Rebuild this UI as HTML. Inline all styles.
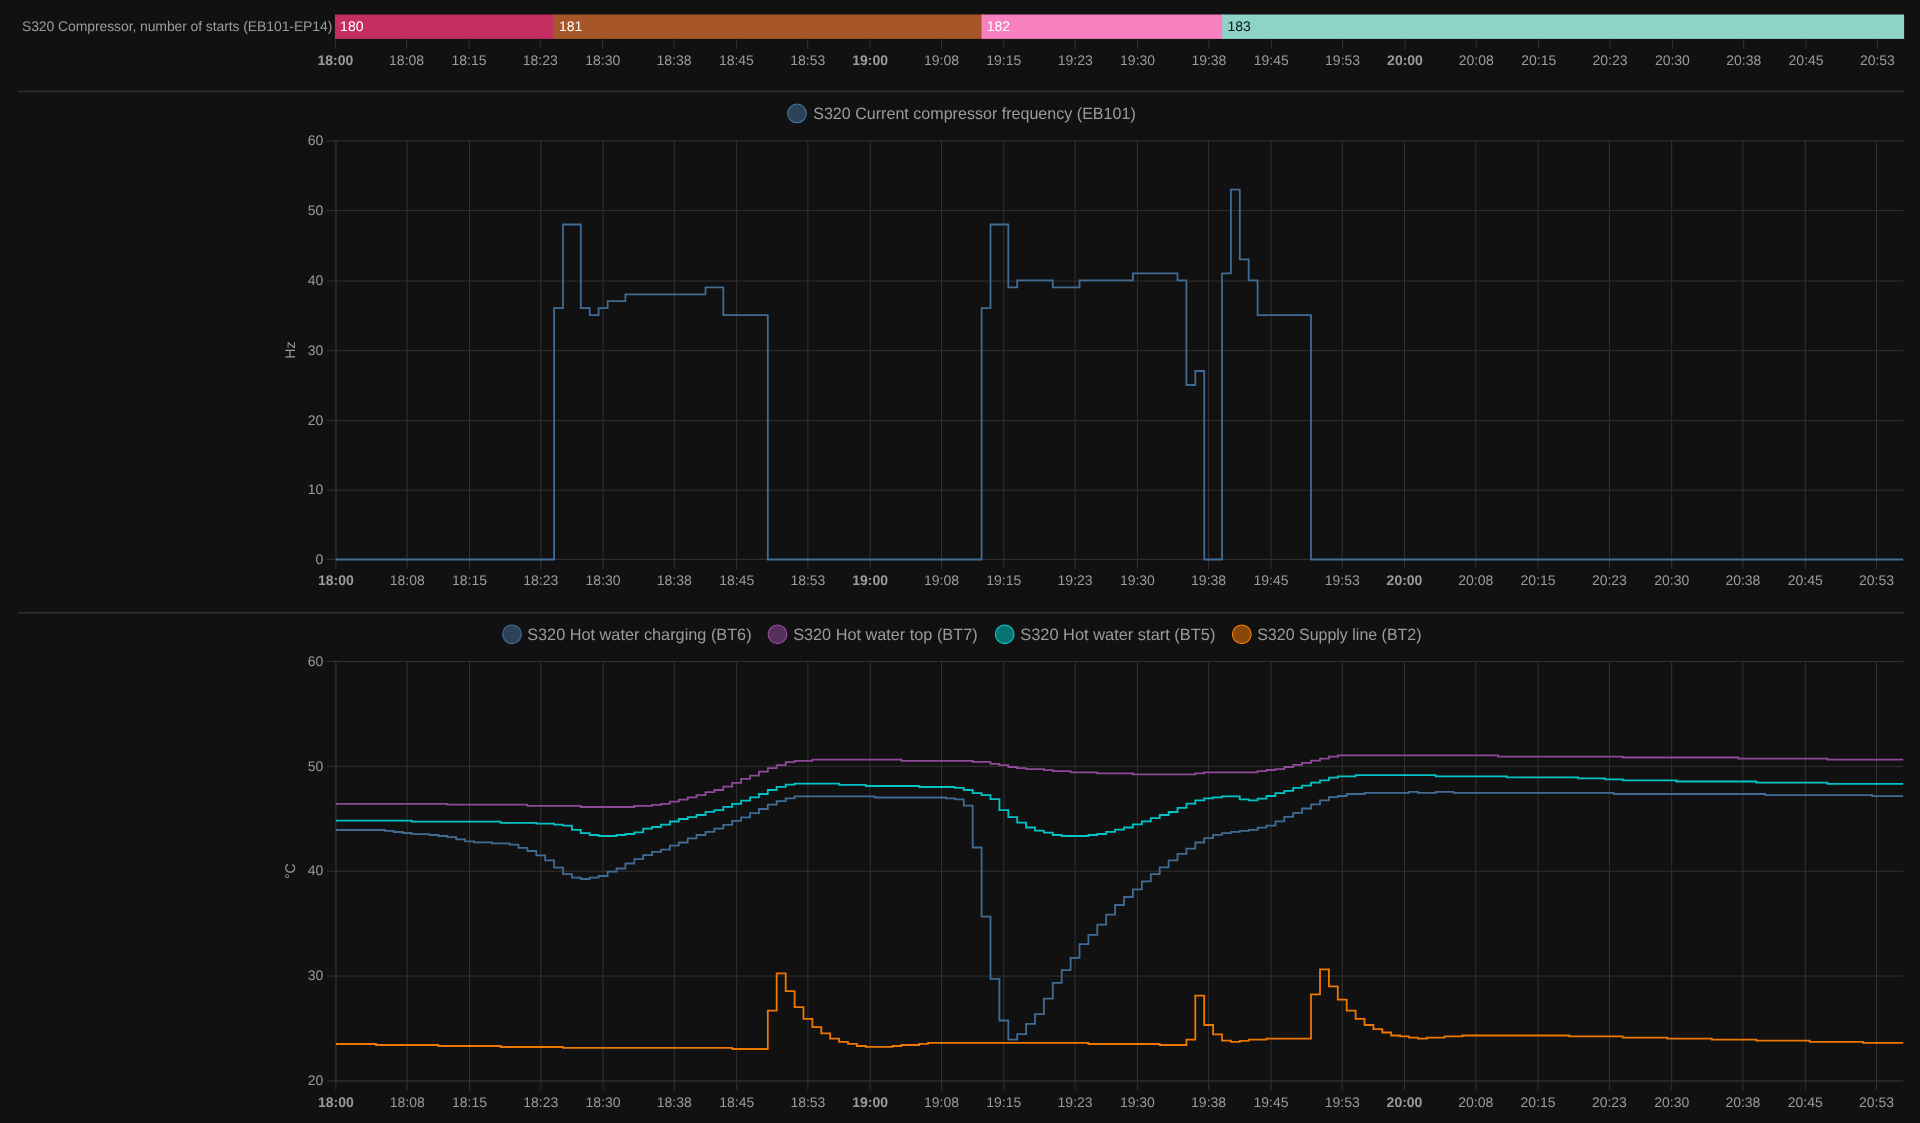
<!DOCTYPE html>
<html lang="en"><head><meta charset="utf-8">
<title>History</title>
<style>
html,body{margin:0;padding:0;background:#111111;}
body{width:1920px;height:1123px;overflow:hidden;font-family:"Liberation Sans", sans-serif;}
svg{display:block;position:absolute;left:0;top:0;will-change:transform;}
text{font-family:"Liberation Sans", sans-serif;font-size:14px;fill:#9b9b9b;text-rendering:geometricPrecision;}
.b{font-weight:bold;}
.lg{font-size:16.4px;}
.grid line{stroke:#323232;stroke-width:1;}
.grid line.h{stroke:#323232;stroke-width:1;}
.grid line.ax{stroke:#2e2e2e;stroke-width:1;}
.sep{stroke:#2b2b2b;stroke-width:2;}
.ser{fill:none;stroke-width:1.8;stroke-opacity:0.93;stroke-linejoin:miter;stroke-linecap:butt;}
</style></head><body>
<svg width="1920" height="1123" viewBox="0 0 1920 1123">
<g id="timeline">
<text x="332.4" y="31" text-anchor="end" textLength="310.5">S320 Compressor, number of starts (EB101-EP14)</text>
<rect x="334.9" y="14.5" width="220.8" height="24.4" fill="#c42e60"/>
<text x="340.1" y="31" style="fill:#ffffff">180</text>
<rect x="553.7" y="14.5" width="429.9" height="24.4" fill="#a65628"/>
<text x="558.9" y="31" style="fill:#ffffff">181</text>
<rect x="981.6" y="14.5" width="242.7" height="24.4" fill="#f781bf"/>
<text x="986.8" y="31" style="fill:#ffffff">182</text>
<rect x="1222.2" y="14.5" width="681.9" height="24.4" fill="#8dd3c7"/>
<text x="1227.4" y="31" style="fill:#0b1513">183</text>
<g class="grid">
<line x1="335.3" y1="38.9" x2="335.3" y2="48.7"/>
<line x1="406.6" y1="38.9" x2="406.6" y2="48.7"/>
<line x1="469.0" y1="38.9" x2="469.0" y2="48.7"/>
<line x1="540.3" y1="38.9" x2="540.3" y2="48.7"/>
<line x1="602.7" y1="38.9" x2="602.7" y2="48.7"/>
<line x1="674.0" y1="38.9" x2="674.0" y2="48.7"/>
<line x1="736.4" y1="38.9" x2="736.4" y2="48.7"/>
<line x1="807.7" y1="38.9" x2="807.7" y2="48.7"/>
<line x1="870.1" y1="38.9" x2="870.1" y2="48.7"/>
<line x1="941.5" y1="38.9" x2="941.5" y2="48.7"/>
<line x1="1003.8" y1="38.9" x2="1003.8" y2="48.7"/>
<line x1="1075.2" y1="38.9" x2="1075.2" y2="48.7"/>
<line x1="1137.6" y1="38.9" x2="1137.6" y2="48.7"/>
<line x1="1208.9" y1="38.9" x2="1208.9" y2="48.7"/>
<line x1="1271.3" y1="38.9" x2="1271.3" y2="48.7"/>
<line x1="1342.6" y1="38.9" x2="1342.6" y2="48.7"/>
<line x1="1405.0" y1="38.9" x2="1405.0" y2="48.7"/>
<line x1="1476.3" y1="38.9" x2="1476.3" y2="48.7"/>
<line x1="1538.7" y1="38.9" x2="1538.7" y2="48.7"/>
<line x1="1610.0" y1="38.9" x2="1610.0" y2="48.7"/>
<line x1="1672.4" y1="38.9" x2="1672.4" y2="48.7"/>
<line x1="1743.7" y1="38.9" x2="1743.7" y2="48.7"/>
<line x1="1806.1" y1="38.9" x2="1806.1" y2="48.7"/>
<line x1="1877.4" y1="38.9" x2="1877.4" y2="48.7"/>
</g>
<text x="335.3" y="64.65" text-anchor="middle" class="b">18:00</text>
<text x="406.6" y="64.65" text-anchor="middle">18:08</text>
<text x="469.0" y="64.65" text-anchor="middle">18:15</text>
<text x="540.3" y="64.65" text-anchor="middle">18:23</text>
<text x="602.7" y="64.65" text-anchor="middle">18:30</text>
<text x="674.0" y="64.65" text-anchor="middle">18:38</text>
<text x="736.4" y="64.65" text-anchor="middle">18:45</text>
<text x="807.7" y="64.65" text-anchor="middle">18:53</text>
<text x="870.1" y="64.65" text-anchor="middle" class="b">19:00</text>
<text x="941.5" y="64.65" text-anchor="middle">19:08</text>
<text x="1003.8" y="64.65" text-anchor="middle">19:15</text>
<text x="1075.2" y="64.65" text-anchor="middle">19:23</text>
<text x="1137.6" y="64.65" text-anchor="middle">19:30</text>
<text x="1208.9" y="64.65" text-anchor="middle">19:38</text>
<text x="1271.3" y="64.65" text-anchor="middle">19:45</text>
<text x="1342.6" y="64.65" text-anchor="middle">19:53</text>
<text x="1405.0" y="64.65" text-anchor="middle" class="b">20:00</text>
<text x="1476.3" y="64.65" text-anchor="middle">20:08</text>
<text x="1538.7" y="64.65" text-anchor="middle">20:15</text>
<text x="1610.0" y="64.65" text-anchor="middle">20:23</text>
<text x="1672.4" y="64.65" text-anchor="middle">20:30</text>
<text x="1743.7" y="64.65" text-anchor="middle">20:38</text>
<text x="1806.1" y="64.65" text-anchor="middle">20:45</text>
<text x="1877.4" y="64.65" text-anchor="middle">20:53</text>
</g>
<line class="sep" x1="18" y1="91.6" x2="1904.5" y2="91.6"/>
<line class="sep" x1="18" y1="612.7" x2="1904.5" y2="612.7"/>
<g id="chart-hz">
<circle cx="797" cy="113.4" r="9.35" fill="#2b4258" stroke="#44739e" stroke-width="1.1"/>
<text class="lg" x="813.2" y="119.1" textLength="322.6" lengthAdjust="spacingAndGlyphs">S320 Current compressor frequency (EB101)</text>
<g class="grid">
<line class="h" x1="326.8" y1="559.3" x2="1903.2" y2="559.3"/>
<line class="h" x1="326.8" y1="490.2" x2="1903.2" y2="490.2"/>
<line class="h" x1="326.8" y1="420.6" x2="1903.2" y2="420.6"/>
<line class="h" x1="326.8" y1="350.7" x2="1903.2" y2="350.7"/>
<line class="h" x1="326.8" y1="281.1" x2="1903.2" y2="281.1"/>
<line class="h" x1="326.8" y1="210.6" x2="1903.2" y2="210.6"/>
<line class="h" x1="326.8" y1="140.9" x2="1903.2" y2="140.9"/>
<line x1="335.9" y1="140.7" x2="335.9" y2="568.7"/>
<line x1="407.2" y1="140.7" x2="407.2" y2="568.7"/>
<line x1="469.5" y1="140.7" x2="469.5" y2="568.7"/>
<line x1="540.8" y1="140.7" x2="540.8" y2="568.7"/>
<line x1="603.1" y1="140.7" x2="603.1" y2="568.7"/>
<line x1="674.3" y1="140.7" x2="674.3" y2="568.7"/>
<line x1="736.7" y1="140.7" x2="736.7" y2="568.7"/>
<line x1="807.9" y1="140.7" x2="807.9" y2="568.7"/>
<line x1="870.2" y1="140.7" x2="870.2" y2="568.7"/>
<line x1="941.5" y1="140.7" x2="941.5" y2="568.7"/>
<line x1="1003.8" y1="140.7" x2="1003.8" y2="568.7"/>
<line x1="1075.1" y1="140.7" x2="1075.1" y2="568.7"/>
<line x1="1137.4" y1="140.7" x2="1137.4" y2="568.7"/>
<line x1="1208.6" y1="140.7" x2="1208.6" y2="568.7"/>
<line x1="1271.0" y1="140.7" x2="1271.0" y2="568.7"/>
<line x1="1342.2" y1="140.7" x2="1342.2" y2="568.7"/>
<line x1="1404.5" y1="140.7" x2="1404.5" y2="568.7"/>
<line x1="1475.8" y1="140.7" x2="1475.8" y2="568.7"/>
<line x1="1538.1" y1="140.7" x2="1538.1" y2="568.7"/>
<line x1="1609.4" y1="140.7" x2="1609.4" y2="568.7"/>
<line x1="1671.7" y1="140.7" x2="1671.7" y2="568.7"/>
<line x1="1742.9" y1="140.7" x2="1742.9" y2="568.7"/>
<line x1="1805.3" y1="140.7" x2="1805.3" y2="568.7"/>
<line x1="1876.5" y1="140.7" x2="1876.5" y2="568.7"/>
<line class="ax" x1="335.9" y1="140.7" x2="335.9" y2="559.5"/>
<line class="ax" x1="335.9" y1="559.5" x2="1903.2" y2="559.5"/>
</g>
<text x="323.3" y="564.15" text-anchor="end">0</text>
<text x="323.3" y="494.35" text-anchor="end">10</text>
<text x="323.3" y="424.55" text-anchor="end">20</text>
<text x="323.3" y="354.75" text-anchor="end">30</text>
<text x="323.3" y="284.95" text-anchor="end">40</text>
<text x="323.3" y="215.15" text-anchor="end">50</text>
<text x="323.3" y="145.35" text-anchor="end">60</text>
<text x="335.9" y="585.1" text-anchor="middle" class="b">18:00</text>
<text x="407.2" y="585.1" text-anchor="middle">18:08</text>
<text x="469.5" y="585.1" text-anchor="middle">18:15</text>
<text x="540.8" y="585.1" text-anchor="middle">18:23</text>
<text x="603.1" y="585.1" text-anchor="middle">18:30</text>
<text x="674.3" y="585.1" text-anchor="middle">18:38</text>
<text x="736.7" y="585.1" text-anchor="middle">18:45</text>
<text x="807.9" y="585.1" text-anchor="middle">18:53</text>
<text x="870.2" y="585.1" text-anchor="middle" class="b">19:00</text>
<text x="941.5" y="585.1" text-anchor="middle">19:08</text>
<text x="1003.8" y="585.1" text-anchor="middle">19:15</text>
<text x="1075.1" y="585.1" text-anchor="middle">19:23</text>
<text x="1137.4" y="585.1" text-anchor="middle">19:30</text>
<text x="1208.6" y="585.1" text-anchor="middle">19:38</text>
<text x="1271.0" y="585.1" text-anchor="middle">19:45</text>
<text x="1342.2" y="585.1" text-anchor="middle">19:53</text>
<text x="1404.5" y="585.1" text-anchor="middle" class="b">20:00</text>
<text x="1475.8" y="585.1" text-anchor="middle">20:08</text>
<text x="1538.1" y="585.1" text-anchor="middle">20:15</text>
<text x="1609.4" y="585.1" text-anchor="middle">20:23</text>
<text x="1671.7" y="585.1" text-anchor="middle">20:30</text>
<text x="1742.9" y="585.1" text-anchor="middle">20:38</text>
<text x="1805.3" y="585.1" text-anchor="middle">20:45</text>
<text x="1876.5" y="585.1" text-anchor="middle">20:53</text>
<text transform="translate(295 350.1) rotate(-90)" text-anchor="middle">Hz</text>
<path class="ser" stroke="#44739e" d="M335.9 559.5H554.1V308.2H563.0V224.5H580.8V308.2H589.7V315.2H598.6V308.2H607.6V301.2H625.4V294.3H705.5V287.3H723.3V315.2H767.8V559.5H981.6V308.2H990.5V224.5H1008.3V287.3H1017.2V280.3H1052.8V287.3H1079.5V280.3H1132.9V273.3H1177.5V280.3H1186.4V385.0H1195.3V371.0H1204.2V559.5H1222.0V273.3H1230.9V189.6H1239.8V259.4H1248.7V280.3H1257.6V315.2H1311.0V559.5H1903.2"/>
</g>
<g id="chart-temp">
<circle cx="512" cy="634.3" r="9.35" fill="#2b4258" stroke="#44739e" stroke-width="1.1"/>
<text class="lg" x="527.2" y="640.0" textLength="224.4" lengthAdjust="spacingAndGlyphs">S320 Hot water charging (BT6)</text>
<circle cx="777.5" cy="634.3" r="9.35" fill="#55305a" stroke="#984ea3" stroke-width="1.1"/>
<text class="lg" x="793.2" y="640.0" textLength="184.4" lengthAdjust="spacingAndGlyphs">S320 Hot water top (BT7)</text>
<circle cx="1004.7" cy="634.3" r="9.35" fill="#097273" stroke="#00d2d5" stroke-width="1.1"/>
<text class="lg" x="1020.2" y="640.0" textLength="195.2" lengthAdjust="spacingAndGlyphs">S320 Hot water start (BT5)</text>
<circle cx="1241.8" cy="634.3" r="9.35" fill="#884809" stroke="#ff7f00" stroke-width="1.1"/>
<text class="lg" x="1257.2" y="640.0" textLength="164.4" lengthAdjust="spacingAndGlyphs">S320 Supply line (BT2)</text>
<g class="grid">
<line class="h" x1="326.8" y1="1081.0" x2="1903.2" y2="1081.0"/>
<line class="h" x1="326.8" y1="976.1" x2="1903.2" y2="976.1"/>
<line class="h" x1="326.8" y1="871.2" x2="1903.2" y2="871.2"/>
<line class="h" x1="326.8" y1="766.3" x2="1903.2" y2="766.3"/>
<line class="h" x1="326.8" y1="661.5" x2="1903.2" y2="661.5"/>
<line x1="335.9" y1="661.5" x2="335.9" y2="1090.2"/>
<line x1="407.2" y1="661.5" x2="407.2" y2="1090.2"/>
<line x1="469.5" y1="661.5" x2="469.5" y2="1090.2"/>
<line x1="540.8" y1="661.5" x2="540.8" y2="1090.2"/>
<line x1="603.1" y1="661.5" x2="603.1" y2="1090.2"/>
<line x1="674.3" y1="661.5" x2="674.3" y2="1090.2"/>
<line x1="736.7" y1="661.5" x2="736.7" y2="1090.2"/>
<line x1="807.9" y1="661.5" x2="807.9" y2="1090.2"/>
<line x1="870.2" y1="661.5" x2="870.2" y2="1090.2"/>
<line x1="941.5" y1="661.5" x2="941.5" y2="1090.2"/>
<line x1="1003.8" y1="661.5" x2="1003.8" y2="1090.2"/>
<line x1="1075.1" y1="661.5" x2="1075.1" y2="1090.2"/>
<line x1="1137.4" y1="661.5" x2="1137.4" y2="1090.2"/>
<line x1="1208.6" y1="661.5" x2="1208.6" y2="1090.2"/>
<line x1="1271.0" y1="661.5" x2="1271.0" y2="1090.2"/>
<line x1="1342.2" y1="661.5" x2="1342.2" y2="1090.2"/>
<line x1="1404.5" y1="661.5" x2="1404.5" y2="1090.2"/>
<line x1="1475.8" y1="661.5" x2="1475.8" y2="1090.2"/>
<line x1="1538.1" y1="661.5" x2="1538.1" y2="1090.2"/>
<line x1="1609.4" y1="661.5" x2="1609.4" y2="1090.2"/>
<line x1="1671.7" y1="661.5" x2="1671.7" y2="1090.2"/>
<line x1="1742.9" y1="661.5" x2="1742.9" y2="1090.2"/>
<line x1="1805.3" y1="661.5" x2="1805.3" y2="1090.2"/>
<line x1="1876.5" y1="661.5" x2="1876.5" y2="1090.2"/>
<line class="ax" x1="335.9" y1="661.5" x2="335.9" y2="1081.0"/>
<line class="ax" x1="335.9" y1="1081.0" x2="1903.2" y2="1081.0"/>
</g>
<text x="323.3" y="1085.25" text-anchor="end">20</text>
<text x="323.3" y="980.36" text-anchor="end">30</text>
<text x="323.3" y="875.48" text-anchor="end">40</text>
<text x="323.3" y="770.59" text-anchor="end">50</text>
<text x="323.3" y="665.70" text-anchor="end">60</text>
<text x="335.9" y="1106.6" text-anchor="middle" class="b">18:00</text>
<text x="407.2" y="1106.6" text-anchor="middle">18:08</text>
<text x="469.5" y="1106.6" text-anchor="middle">18:15</text>
<text x="540.8" y="1106.6" text-anchor="middle">18:23</text>
<text x="603.1" y="1106.6" text-anchor="middle">18:30</text>
<text x="674.3" y="1106.6" text-anchor="middle">18:38</text>
<text x="736.7" y="1106.6" text-anchor="middle">18:45</text>
<text x="807.9" y="1106.6" text-anchor="middle">18:53</text>
<text x="870.2" y="1106.6" text-anchor="middle" class="b">19:00</text>
<text x="941.5" y="1106.6" text-anchor="middle">19:08</text>
<text x="1003.8" y="1106.6" text-anchor="middle">19:15</text>
<text x="1075.1" y="1106.6" text-anchor="middle">19:23</text>
<text x="1137.4" y="1106.6" text-anchor="middle">19:30</text>
<text x="1208.6" y="1106.6" text-anchor="middle">19:38</text>
<text x="1271.0" y="1106.6" text-anchor="middle">19:45</text>
<text x="1342.2" y="1106.6" text-anchor="middle">19:53</text>
<text x="1404.5" y="1106.6" text-anchor="middle" class="b">20:00</text>
<text x="1475.8" y="1106.6" text-anchor="middle">20:08</text>
<text x="1538.1" y="1106.6" text-anchor="middle">20:15</text>
<text x="1609.4" y="1106.6" text-anchor="middle">20:23</text>
<text x="1671.7" y="1106.6" text-anchor="middle">20:30</text>
<text x="1742.9" y="1106.6" text-anchor="middle">20:38</text>
<text x="1805.3" y="1106.6" text-anchor="middle">20:45</text>
<text x="1876.5" y="1106.6" text-anchor="middle">20:53</text>
<text transform="translate(295 871.2) rotate(-90)" text-anchor="middle">°C</text>
<path class="ser" stroke="#ff7f00" d="M335.9 1044.0H376.0V1045.0H438.4V1046.0H500.7V1047.0H563.0V1047.8H732.2V1049.0H767.8V1010.6H776.7V973.4H785.7V991.2H794.6V1007.2H803.5V1018.8H812.4V1027.1H821.3V1033.4H830.2V1038.7H839.1V1041.9H848.0V1043.8H856.9V1046.0H865.8V1046.9H892.5V1046.0H901.4V1045.0H919.2V1043.8H928.1V1042.8H1088.4V1044.0H1159.7V1045.0H1186.4V1039.7H1195.3V995.6H1204.2V1025.0H1213.1V1034.4H1222.0V1040.6H1230.9V1041.9H1239.8V1040.8H1248.7V1039.7H1266.5V1038.7H1311.0V994.4H1320.0V969.4H1328.9V986.3H1337.8V999.7H1346.7V1010.6H1355.6V1018.8H1364.5V1025.0H1373.4V1029.1H1382.3V1032.5H1391.2V1035.5H1400.1V1036.4H1409.0V1037.6H1417.9V1038.7H1426.8V1037.6H1444.6V1036.4H1462.4V1035.5H1569.3V1036.4H1622.7V1037.6H1667.2V1038.7H1711.8V1039.7H1756.3V1040.7H1809.7V1041.8H1863.2V1042.8H1903.2"/>
<path class="ser" stroke="#44739e" d="M335.9 830.0H384.9V830.9H393.8V832.0H402.7V833.0H411.6V834.2H429.5V835.0H438.4V836.0H447.3V837.1H456.2V839.4H465.1V841.4H474.0V842.4H491.8V843.4H509.6V844.7H518.5V847.8H527.4V851.0H536.3V855.3H545.2V860.3H554.1V867.6H563.0V874.1H571.9V877.7H580.8V879.0H589.7V877.7H598.6V876.0H607.6V871.6H616.5V868.5H625.4V863.5H634.3V859.2H643.2V855.1H652.1V851.9H661.0V849.6H669.9V845.6H678.8V842.5H687.7V838.4H696.6V835.0H705.5V831.9H714.4V828.7H723.3V824.8H732.2V820.9H741.1V817.3H750.0V813.1H758.9V809.0H767.8V804.6H776.7V801.1H785.7V798.3H794.6V796.3H874.7V797.5H945.9V798.4H954.8V799.4H963.8V805.7H972.7V847.5H981.6V916.6H990.5V978.9H999.4V1020.5H1008.3V1039.7H1017.2V1034.1H1026.1V1023.9H1035.0V1014.2H1043.9V998.6H1052.8V982.8H1061.7V970.1H1070.6V957.8H1079.5V944.2H1088.4V934.8H1097.3V924.6H1106.2V914.6H1115.1V905.0H1124.0V897.0H1132.9V889.4H1141.9V881.4H1150.8V874.2H1159.7V867.3H1168.6V860.3H1177.5V853.8H1186.4V848.6H1195.3V842.5H1204.2V838.2H1213.1V834.8H1222.0V833.2H1230.9V831.9H1239.8V830.9H1248.7V829.9H1257.6V827.7H1266.5V825.7H1275.4V821.3H1284.3V816.9H1293.2V812.9H1302.1V808.5H1311.0V804.4H1320.0V800.3H1328.9V797.2H1337.8V796.0H1346.7V794.0H1364.5V792.9H1409.0V791.9H1417.9V792.9H1435.7V791.9H1453.5V792.9H1613.8V794.0H1765.2V795.1H1872.1V796.1H1903.2"/>
<path class="ser" stroke="#00d2d5" d="M335.9 820.7H411.6V821.7H500.7V822.8H536.3V823.7H554.1V824.7H563.0V825.7H571.9V829.8H580.8V833.2H589.7V835.0H598.6V836.0H616.5V835.0H625.4V834.0H634.3V832.3H643.2V828.7H652.1V827.0H661.0V824.7H669.9V821.5H678.8V819.0H687.7V817.2H696.6V815.0H705.5V811.9H714.4V810.1H723.3V806.9H732.2V803.8H741.1V800.6H750.0V797.3H758.9V794.0H767.8V790.0H776.7V786.9H785.7V784.7H794.6V783.6H839.1V784.8H865.8V786.0H919.2V787.0H954.8V787.9H963.8V790.0H972.7V793.2H981.6V795.1H990.5V799.2H999.4V810.1H1008.3V817.2H1017.2V822.6H1026.1V827.5H1035.0V830.6H1043.9V832.7H1052.8V835.0H1061.7V836.0H1088.4V835.0H1097.3V834.0H1106.2V831.9H1115.1V829.7H1124.0V827.5H1132.9V824.4H1141.9V821.3H1150.8V818.2H1159.7V815.0H1168.6V812.0H1177.5V807.8H1186.4V803.6H1195.3V800.4H1204.2V798.4H1213.1V797.3H1222.0V796.3H1239.8V799.4H1248.7V800.4H1257.6V798.6H1266.5V796.0H1275.4V793.2H1284.3V790.9H1293.2V787.8H1302.1V785.6H1311.0V782.6H1320.0V780.4H1328.9V777.6H1337.8V776.3H1355.6V775.1H1435.7V776.3H1507.0V777.4H1578.2V778.4H1604.9V779.4H1622.7V780.4H1676.2V781.5H1756.3V782.6H1827.5V783.9H1903.2"/>
<path class="ser" stroke="#984ea3" d="M335.9 803.8H447.3V804.7H527.4V805.9H580.8V807.0H634.3V805.9H652.1V804.8H661.0V803.8H669.9V801.7H678.8V799.7H687.7V797.3H696.6V795.1H705.5V792.1H714.4V790.0H723.3V786.7H732.2V782.9H741.1V778.8H750.0V775.7H758.9V771.7H767.8V768.1H776.7V765.1H785.7V762.1H794.6V760.8H812.4V759.6H901.4V760.8H972.7V761.9H990.5V763.8H999.4V765.1H1008.3V767.0H1017.2V768.1H1026.1V769.2H1043.9V770.2H1052.8V771.2H1070.6V772.3H1097.3V773.3H1132.9V774.4H1195.3V773.3H1204.2V772.3H1257.6V771.2H1266.5V770.0H1275.4V769.1H1284.3V767.0H1293.2V764.8H1302.1V762.8H1311.0V760.7H1320.0V758.6H1328.9V756.6H1337.8V755.4H1498.1V756.6H1622.7V757.5H1738.5V758.6H1827.5V759.6H1903.2"/>
</g>
</svg>
</body></html>
